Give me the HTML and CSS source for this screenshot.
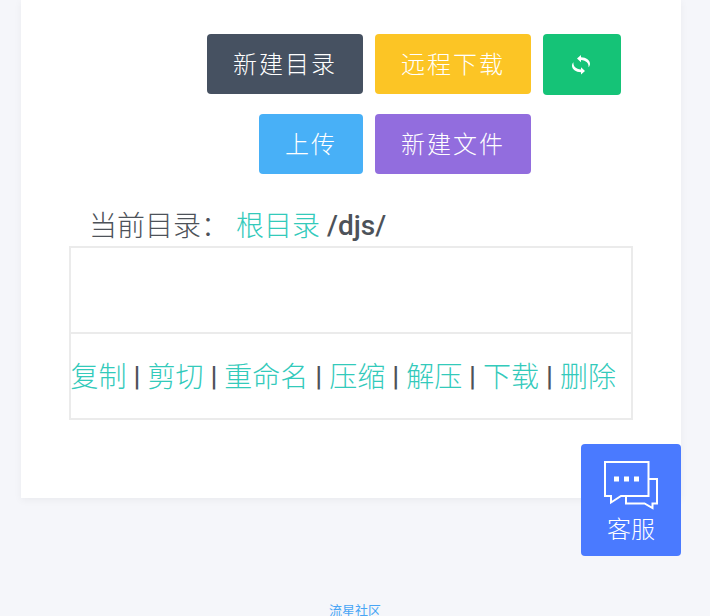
FILE: index.html
```
<!DOCTYPE html>
<html lang="zh-CN">
<head>
    <meta charset="UTF-8">
    <meta name="viewport" content="width=device-width, initial-scale=1.0">
    <title>文件管理</title>
    <link rel="stylesheet" href="styles.css">
</head>
<body>
    <div class="card">
        <div class="toolbar">
            <div class="toolbar-row">
                <button class="btn btn-dark">新建目录</button>
                <button class="btn btn-warning">远程下载</button>
                <button class="btn btn-success" aria-label="刷新">
                    <svg class="refresh-icon" viewBox="0 0 20 22">
                        <path d="M6 4.500 10 1v2.300c5.300.2 9 3 9 6.500 0 1.300-.5 2.500-1.500 3.400.6-4-2.500-6.700-7.500-7.200v2.200z"/>
                        <path d="M14 17 10 20.500v-2.300C4.700 18 1 15.200 1 11.700c0-1.300.5-2.500 1.500-3.400-.6 4 2.500 6.700 7.500 7.200v-2.200z"/>
                    </svg>
                </button>
            </div>
            <div class="toolbar-row toolbar-row-second">
                <button class="btn btn-info">上传</button>
                <button class="btn btn-purple">新建文件</button>
            </div>
        </div>

        <div class="path">
            <span class="path-label">当前目录：</span>
            <a class="link path-root">根目录</a>
            <span class="path-name">/djs/</span>
        </div>

        <div class="file-table">
            <div class="file-row"></div>
            <div class="file-row">
                <a class="link">复制</a> | <a class="link">剪切</a> | <a class="link">重命名</a> | <a class="link">压缩</a> | <a class="link">解压</a> | <a class="link">下载</a> | <a class="link">删除</a>
            </div>
        </div>
    </div>

    <div class="footer">流星社区</div>

    <div class="service">
        <svg class="service-icon" viewBox="0 0 56 50">
            <path class="line" d="M46 19h8v24.500h-4.500V48l-8-4.500H23V36"/>
            <path class="line" d="M2 2h43.500v34H18L8 42.500V36H2z"/>
            <path class="dots" d="M11 16.500h5v5h-5zM21 16.500h5v5h-5zM31 16.500h5v5h-5z"/>
        </svg>
        <span class="service-text">客服</span>
    </div>
</body>
</html>
```
FILE: styles.css
```
* {
    margin: 0;
    padding: 0;
    box-sizing: border-box;
}

body {
    font-family: Roboto, 'Noto Sans CJK SC', sans-serif;
    background: #f5f6fa;
    color: #4d5259;
    height: 616px;
    overflow: hidden;
}

.card {
    width: 660px;
    height: 498px;
    margin-left: 21px;
    padding: 34px 48px 0;
    background: #fff;
    box-shadow: 0 2px 8px rgba(0, 0, 0, 0.05);
}

.toolbar {
    display: flex;
    flex-direction: column;
    gap: 19px;
    padding-right: 12px;
}

.toolbar-row {
    display: flex;
    justify-content: flex-end;
    align-items: flex-start;
    gap: 12px;
}

.toolbar-row-second {
    padding-right: 90px;
}

.btn {
    height: 60px;
    padding: 2px 26px 0;
    border: none;
    border-radius: 4px;
    color: #fff;
    font-family: Roboto, 'Noto Sans CJK SC', sans-serif;
    font-size: 24px;
    font-weight: 300;
    letter-spacing: 2px;
    line-height: 58px;
    white-space: nowrap;
    cursor: pointer;
}

.btn-dark {
    background: #465161;
}

.btn-warning {
    background: #fcc525;
}

.btn-success {
    width: 78px;
    height: 61px;
    padding-top: 0;
    background: #15c377;
}

.btn-info {
    background: #48b0f7;
}

.btn-purple {
    background: #926dde;
}

.refresh-icon {
    display: block;
    width: 20px;
    height: 22px;
    margin-left: 2px;
    fill: #fff;
}

.path {
    display: flex;
    height: 72px;
    padding: 31px 0 0 20px;
    font-size: 28px;
    line-height: 40px;
    white-space: nowrap;
}

.path-label {
    width: 147px;
    padding-top: 2px;
    font-weight: 300;
}

.path-root {
    padding-top: 2px;
}

.path-name {
    margin-left: 7px;
    padding-top: 1px;
    font-weight: 500;
}

.link {
    color: #33cabb;
    font-weight: 300;
    cursor: pointer;
}

.file-table {
    width: 564px;
    border: 2px solid #ebebeb;
}

.file-row {
    height: 84px;
    font-size: 28px;
    font-weight: 500;
    line-height: 86px;
    text-indent: -0.5px;
    white-space: nowrap;
}

.file-row .link {
    vertical-align: -1px;
}

.file-row + .file-row {
    height: 86px;
    border-top: 2px solid #ebebeb;
}

.footer {
    margin-top: 103px;
    padding-left: 329px;
    color: #48a5f5;
    font-size: 13px;
    line-height: 20px;
}

.service {
    position: fixed;
    left: 581px;
    top: 444px;
    display: flex;
    flex-direction: column;
    align-items: center;
    width: 100px;
    height: 112px;
    padding-top: 16px;
    border-radius: 4px;
    background: #4a7aff;
    color: #fff;
}

.service-icon {
    width: 56px;
    height: 50px;
}

.service-icon .line {
    fill: none;
    stroke: #fff;
    stroke-width: 2;
}

.service-icon .dots {
    fill: #fff;
}

.service-text {
    padding-top: 2px;
    font-size: 24px;
    font-weight: 300;
    line-height: 36px;
}
```
